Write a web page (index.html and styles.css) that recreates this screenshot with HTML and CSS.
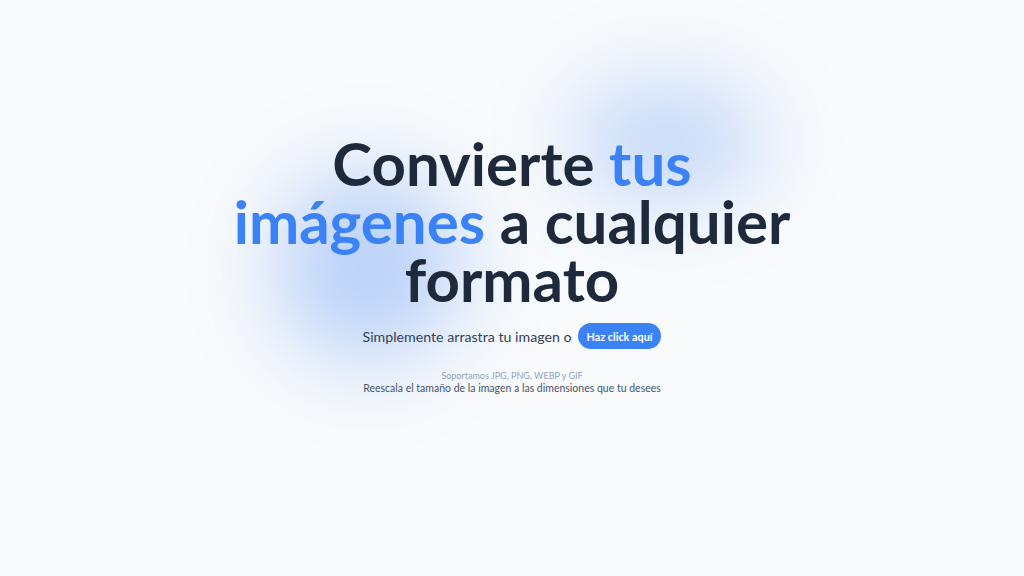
FILE: index.html
```html
<!DOCTYPE html>
<html lang="es">
<head>
<meta charset="utf-8">
<title>Convierte tus imágenes</title>
<link rel="stylesheet" href="styles.css">
</head>
<body>
<main class="page">
  <div class="blob blob-top"></div>
  <div class="blob blob-left"></div>
  <section class="hero">
    <h1 class="title">Convierte <span class="accent">tus</span><br><span class="accent">imágenes</span> a cualquier<br>formato</h1>
    <div class="cta">
      <span class="cta-text">Simplemente arrastra tu imagen o</span>
      <button class="btn" type="button">Haz click aquí</button>
    </div>
    <div class="notes">
      <p class="note-small">Soportamos JPG, PNG, WEBP y GIF</p>
      <p class="note">Reescala el tamaño de la imagen a las dimensiones que tu desees</p>
    </div>
  </section>
</main>
</body>
</html>
```
FILE: styles.css
```css
* { box-sizing: border-box; }
html, body { margin: 0; padding: 0; }
body {
  background: #f8fafc;
  font-family: "Lato", "Open Sans", sans-serif;
  color: #1e293b;
  width: 1024px;
  height: 576px;
  overflow: hidden;
}
.page {
  position: relative;
  width: 100%;
  height: 100%;
  overflow: hidden;
}
.blob {
  position: absolute;
  border-radius: 50%;
  background: rgba(80, 140, 245, 0.3);
  filter: blur(42px);
  z-index: 0;
}
.blob-top {
  left: 572px;
  top: 82px;
  width: 190px;
  height: 120px;
}
.blob-left {
  left: 275px;
  top: 172px;
  width: 185px;
  height: 190px;
  background: rgba(80, 140, 245, 0.36);
}
.hero {
  position: relative;
  z-index: 1;
  display: flex;
  flex-direction: column;
  align-items: center;
  padding-top: 134px;
}
.title {
  margin: 0;
  font-size: 60px;
  line-height: 58px;
  font-weight: 700;
  text-align: center;
  color: #1e293b;
}
.accent { color: #3b82f6; }
.cta {
  display: flex;
  align-items: center;
  gap: 6px;
  margin-top: 15px;
}
.cta-text {
  font-size: 14.2px;
  color: #334155;
}
.btn {
  border: none;
  background: #3b82f6;
  color: #fff;
  font-family: inherit;
  font-weight: 700;
  font-size: 10.8px;
  height: 26px;
  padding: 0 9px;
  border-radius: 13px;
}
.notes {
  margin-top: 21px;
  text-align: center;
}
.notes p { margin: 0; }
.note-small {
  font-size: 9px;
  line-height: 12px;
  color: #94a3b8;
}
.note {
  font-size: 10.5px;
  line-height: 13px;
  color: #475569;
}
```
